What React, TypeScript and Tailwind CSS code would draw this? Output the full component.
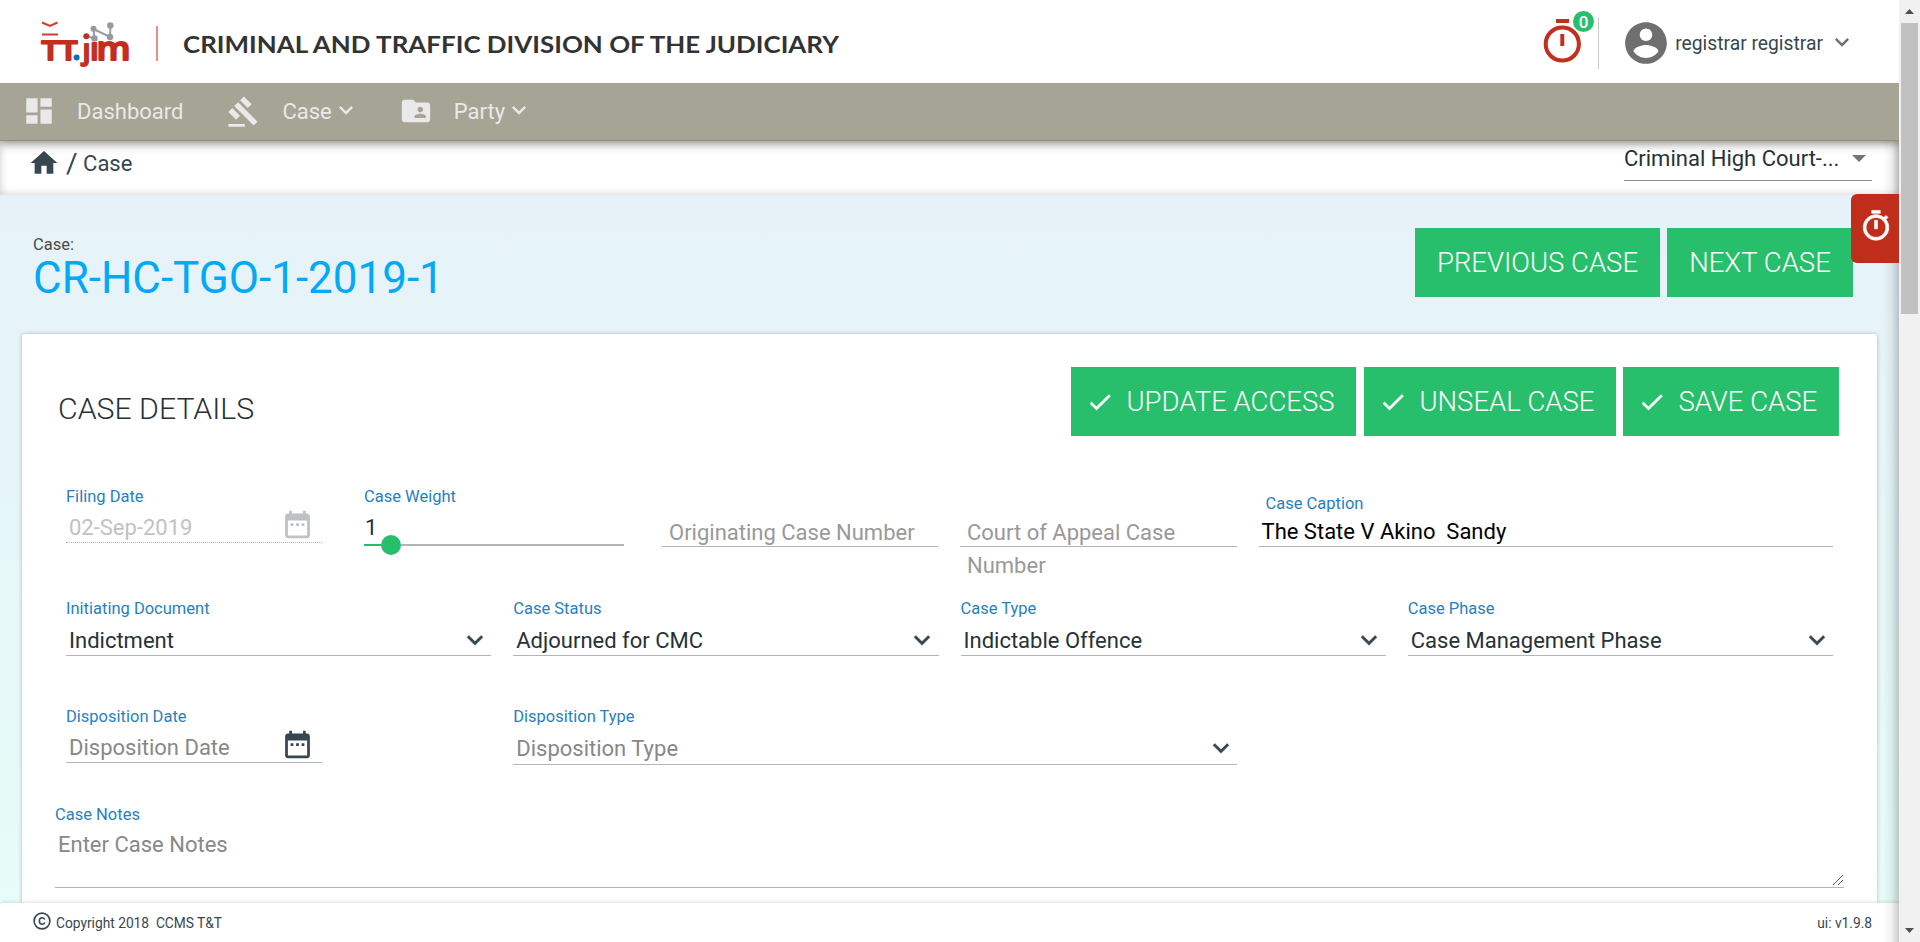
import type { ReactNode } from "react";

type IconProps = { d: string; className?: string };

function Icon({ d, className = "" }: IconProps) {
  return (
    <svg viewBox="0 0 24 24" fill="currentColor" className={`block shrink-0 ${className}`} aria-hidden="true">
      <path d={d} />
    </svg>
  );
}

const paths = {
  dashboard: "M3 13h8V3H3v10zm0 8h8v-6H3v6zm10 0h8V11h-8v10zm0-18v6h8V3h-8z",
  gavel:
    "M1 21h12v2H1zM5.245 8.07l2.83-2.827 14.14 14.142-2.828 2.828zM12.317 1l5.657 5.656-2.83 2.83-5.654-5.66zM3.825 9.485l5.657 5.657-2.828 2.828-5.657-5.657z",
  folder:
    "M20 6h-8l-2-2H4c-1.1 0-1.99.9-1.99 2L2 18c0 1.1.9 2 2 2h16c1.1 0 2-.9 2-2V8c0-1.1-.9-2-2-2zm-5 3c1.1 0 2 .9 2 2s-.9 2-2 2-2-.9-2-2 .9-2 2-2zm4 8h-8v-1c0-1.33 2.67-2 4-2s4 .67 4 2v1z",
  home: "M10 20v-6h4v6h5v-8h3L12 3 2 12h3v8z",
  chevron: "M16.59 8.59L12 13.17 7.41 8.59 6 10l6 6 6-6z",
  account:
    "M12 2C6.48 2 2 6.48 2 12s4.48 10 10 10 10-4.48 10-10S17.52 2 12 2zm0 3c1.66 0 3 1.34 3 3s-1.34 3-3 3-3-1.34-3-3 1.34-3 3-3zm0 14.2c-2.5 0-4.71-1.28-6-3.22.03-1.99 4-3.08 6-3.08 1.99 0 5.97 1.09 6 3.08-1.29 1.94-3.5 3.22-6 3.22z",
  timer:
    "M15 1H9v2h6V1zm-4 13h2V8h-2v6zm8.03-6.61l1.42-1.42c-.43-.51-.9-.99-1.41-1.41l-1.42 1.42C16.07 4.74 14.12 4 12 4c-4.97 0-9 4.03-9 9s4.02 9 9 9 9-4.03 9-9c0-2.12-.74-4.07-1.97-5.61zM12 20c-3.87 0-7-3.13-7-7s3.13-7 7-7 7 3.13 7 7-3.13 7-7 7z",
  calendar:
    "M9 11H7v2h2v-2zm4 0h-2v2h2v-2zm4 0h-2v2h2v-2zm2-7h-1V2h-2v2H8V2H6v2H5c-1.11 0-1.99.9-1.99 2L3 20c0 1.1.89 2 2 2h14c1.1 0 2-.9 2-2V6c0-1.1-.9-2-2-2zm0 16H5V9h14v11z",
  check: "M9 16.17L4.83 12l-1.42 1.41L9 19 21 7l-1.41-1.41z",
};

function Logo() {
  return (
    <svg viewBox="0 0 900 83" className="block h-[83px] w-[900px] font-['Lato',sans-serif]">
      <g fill="none" stroke="#c9402f" strokeWidth="2">
        <path d="M42 22.500l8 3.500 7.500-3.500" />
        <path d="M42 34.500h16" />
      </g>
      <g stroke="#9a9c9f" strokeWidth="2" fill="none">
        <path d="M94.500 38.500L93.500 29L110 37L110.500 26M86 36L94.500 38.500" />
      </g>
      <g fill="#97999c">
        <circle cx="93.500" cy="28.800" r="3" />
        <circle cx="94.500" cy="38.500" r="3.200" />
        <circle cx="110" cy="37" r="3.200" />
        <circle cx="110.300" cy="25.500" r="3.200" />
      </g>
      <circle cx="86.300" cy="36.300" r="3" fill="#c32f1e" />
      <circle cx="76.600" cy="57.400" r="3" fill="#0a6fb5" />
      <g
        fill="#c32f1e"
        stroke="#c32f1e"
        strokeWidth="1.800"
        strokeLinejoin="round"
        className="font-['Open_Sans',sans-serif] font-semibold"
      >
        <text x="41.500" y="60.200" fontSize="26.500" textLength="36" lengthAdjust="spacingAndGlyphs">TT</text>
        <text x="82.800" y="58.500" fontSize="27">ȷ</text>
        <text x="90" y="60" fontSize="31">ı</text>
        <text x="96.500" y="60" fontSize="32" textLength="34" lengthAdjust="spacingAndGlyphs">m</text>
      </g>
      <path d="M157 26v35" stroke="#e98f86" strokeWidth="2" />
      <text
        x="183"
        y="53.300"
        fill="#333"
        fontSize="22"
        fontWeight="700"
        textLength="656"
        lengthAdjust="spacingAndGlyphs"
      >
        CRIMINAL AND TRAFFIC DIVISION OF THE JUDICIARY
      </text>
    </svg>
  );
}

function Header() {
  return (
    <header className="relative z-20 flex h-[83px] justify-between bg-white">
      <Logo />
      <div className="flex">
        <div className="relative mt-[18px] h-[51px] w-[57px] border-r border-[#c8c8c8]">
          <svg viewBox="0 0 40 48" className="block h-12 w-10 text-[#c32f1e]" fill="none" stroke="currentColor">
            <circle cx="20.300" cy="26" r="16.600" strokeWidth="4" />
            <path d="M14 3h13M20.300 16v12" strokeWidth="4" />
          </svg>
          <span className="absolute top-[-7px] left-[31px] flex size-[21px] items-center justify-center rounded-full bg-[#27bf6c] pt-px text-[17px] leading-none font-medium text-white">
            0
          </span>
        </div>
        <div className="mt-[18px] ml-[22px] flex h-[50px] items-center">
          <Icon d={paths.account} className="size-[50px] text-[#6f6f6f]" />
          <span className="mt-[2px] ml-1 text-[19.300px] text-[#37474f]">registrar registrar</span>
          <Icon d={paths.chevron} className="mr-[43px] mb-[3px] ml-[5px] size-7 text-[#6f6f6f]" />
        </div>
      </div>
    </header>
  );
}

function Nav() {
  return (
    <nav className="relative z-10 flex h-[58px] border-b border-[#92906f] bg-[#a6a494] text-[22px] leading-[58px] text-[#e9e9e9] shadow-[0_2px_10px_rgba(0,0,0,0.4)]">
      <Icon d={paths.dashboard} className="mt-[11px] ml-[21.500px] size-[34px]" />
      <span className="ml-[21.500px]">Dashboard</span>
      <Icon d={paths.gavel} className="mt-[12px] ml-[44px] size-[33px]" />
      <span className="ml-[22px]">Case</span>
      <Icon d={paths.chevron} className="mt-[13px] size-7" />
      <Icon d={paths.folder} className="mt-[11px] ml-[39px] size-[34px]" />
      <span className="ml-[21px]">Party</span>
      <Icon d={paths.chevron} className="mt-[13px] size-7" />
    </nav>
  );
}

function Breadcrumb() {
  return (
    <div className="flex h-[54px] justify-between bg-white shadow-[inset_0_0_8px_rgba(0,0,0,0.22)]">
      <div className="flex text-[22px] leading-[45px] text-[#37474f]">
        <Icon d={paths.home} className="mt-[6px] ml-7 size-8" />
        <span className="ml-[6px] text-[28px]">/</span>
        <span className="ml-[5.500px]">Case</span>
      </div>
      <div className="mr-[27px] flex h-[40px] w-[248px] justify-between border-b border-[#8c8c8c] text-[22px] leading-[35px] text-[#263238]">
        <span>Criminal High Court-...</span>
        <svg viewBox="0 0 14 7" className="mt-[14px] mr-[6.500px] h-[7px] w-[14px] fill-[#757575]">
          <path d="M0 0h14L7 7z" />
        </svg>
      </div>
    </div>
  );
}

function Button({ children, check = false, className = "" }: { children: ReactNode; check?: boolean; className?: string }) {
  return (
    <button
      className={`flex h-[69px] items-center bg-[#27bf6c] text-[27.500px] leading-[69px] font-light whitespace-nowrap text-white ${className}`}
    >
      {check && <Icon d={paths.check} className="mr-[13px] ml-[14.500px] size-[28px] stroke-current stroke-[0.4]" />}
      {children}
    </button>
  );
}

function Field({ label, children, className = "" }: { label: string; children: ReactNode; className?: string }) {
  return (
    <div className={className}>
      <div className="mb-[7px] h-[21px] text-[16.500px] leading-[22px] text-[#2a7fbd]">{label}</div>
      {children}
    </div>
  );
}

function Select({ label, value, muted = false, className = "" }: { label: string; value: string; muted?: boolean; className?: string }) {
  return (
    <Field label={label} className={className}>
      <div
        className={`flex justify-between border-b border-[#b5b5b5] pl-[3px] ${
          muted ? "h-[31px] leading-[29px] text-[#888]" : "h-[30px] leading-[30px] text-[#263238]"
        }`}
      >
        <span>{value}</span>
        <Icon
          d={paths.chevron}
          className="mt-[-2px] mr-[0.5px] size-8 stroke-current stroke-[0.3] text-[#37474f]"
        />
      </div>
    </Field>
  );
}

function DateField({ label, value, disabled = false }: { label: string; value: string; disabled?: boolean }) {
  return (
    <Field label={label} className="w-64">
      <div
        className={`flex h-[29px] justify-between border-b pl-[3px] leading-[27px] ${
          disabled ? "border-dotted border-[#b5b5b5] text-[#c2c2c2]" : "border-[#b5b5b5] text-[#888]"
        }`}
      >
        <span>{value}</span>
        <Icon
          d={paths.calendar}
          className={`mt-[-6px] mr-2 size-[33px] ${disabled ? "text-[#bcc1c4]" : "text-[#37474f]"}`}
        />
      </div>
    </Field>
  );
}

function CaseCard() {
  return (
    <section className="mr-[22px] ml-[22px] flex-1 rounded-t-[3px] bg-white shadow-[0_0_4px_rgba(0,0,0,0.25)]">
      <div className="flex justify-between pt-[33px] pr-[38px] pl-[36px]">
        <h2 className="pt-[14px] text-[30.250px] leading-[55px] font-light text-[#263238]">CASE DETAILS</h2>
        <div className="flex">
          <Button check className="mr-2 w-[285px]">UPDATE ACCESS</Button>
          <Button check className="mr-[7px] w-[252px]">UNSEAL CASE</Button>
          <Button check className="w-[216px]">SAVE CASE</Button>
        </div>
      </div>

      <div className="mr-11 ml-11 text-[22px] whitespace-nowrap">
        <div className="mt-[50px] grid h-[61px] grid-cols-[298px_298px_298px_299px_574px]">
          <DateField label="Filing Date" value="02-Sep-2019" disabled />
          <Field label="Case Weight" className="w-[260px]">
            <div className="h-[30px] pl-px leading-[27px] text-[#263238]">1</div>
            <div className="flex h-[2px] items-center">
              <div className="h-[2px] w-[17px] bg-[#27bf6c]" />
              <div className="size-5 shrink-0 rounded-full bg-[#27bf6c]" />
              <div className="h-[2px] flex-1 bg-[#b5b5b5]" />
            </div>
          </Field>
          <div className="mt-8 h-[29px] w-[276px] border-b border-[#b5b5b5] pl-[7px] leading-[29px] text-[#999]">
            Originating Case Number
          </div>
          <div className="mt-8 h-[29px] w-[277px] border-b border-[#b5b5b5] pl-[7px] leading-[33px] whitespace-normal text-[#999]">
            <span className="relative top-[-2px] block">Court of Appeal Case Number</span>
          </div>
          <div className="pt-[7px]">
            <div className="h-[21px] pl-[6.500px] text-[16.500px] leading-[22px] text-[#2a7fbd]">Case Caption</div>
            <div className="mt-1 h-[29px] border-b border-[#b5b5b5] pl-[2.500px] leading-[27px] whitespace-pre text-black">
              {"The State V Akino  Sandy"}
            </div>
          </div>
        </div>

        <div className="mt-[51px] grid grid-cols-4 gap-[22px]">
          <Select label="Initiating Document" value="Indictment" />
          <Select label="Case Status" value="Adjourned for CMC" />
          <Select label="Case Type" value="Indictable Offence" />
          <Select label="Case Phase" value="Case Management Phase" />
        </div>

        <div className="mt-[50px] grid grid-cols-4 gap-[22px]">
          <DateField label="Disposition Date" value="Disposition Date" />
          <Select label="Disposition Type" value="Disposition Type" muted className="w-[724px]" />
        </div>

        <div className="mt-[39px] mr-[-11px] ml-[-11px]">
          <div className="h-5 text-[16.500px] leading-[22px] text-[#2a7fbd]">Case Notes</div>
          <div className="flex h-[64px] items-end justify-between border-b border-[#b5b5b5] pl-[3px] text-[#888]">
            <span className="mb-[27px] leading-[31px]">Enter Case Notes</span>
            <svg viewBox="0 0 12 12" className="mb-px size-3" stroke="#555" fill="none">
              <path d="M1 11L11 1M6 11l5-5" />
            </svg>
          </div>
        </div>
      </div>
    </section>
  );
}

function Footer() {
  return (
    <footer className="relative flex h-[39px] shrink-0 justify-between rounded-t-[3px] bg-white pr-[27px] pl-[33px] text-[13.750px] leading-[40px] text-[#37474f] shadow-[0_0_4px_rgba(0,0,0,0.2)]">
      <div className="flex">
        <svg viewBox="0 0 18 18" className="mt-[8.500px] mr-[5px] size-[18px]" fill="none" stroke="currentColor" strokeWidth="1.600">
          <circle cx="9" cy="9" r="7.900" />
          <path d="M11.800 7.500C11.300 6.300 10.400 5.700 9.100 5.700C7.400 5.700 6.400 7 6.400 9S7.400 12.300 9.100 12.300C10.400 12.300 11.300 11.700 11.800 10.500" />
        </svg>
        <span className="whitespace-pre">{"Copyright 2018  CCMS T&T"}</span>
      </div>
      <span>ui: v1.9.8</span>
    </footer>
  );
}

function Scrollbar() {
  return (
    <div className="flex w-[21px] flex-col items-center justify-between bg-[#f1f1f1]">
      <div className="flex flex-col items-center">
        <svg viewBox="0 0 9 5" className="mt-[9px] h-[5px] w-[9px] fill-[#505050]">
          <path d="M4.500 0L9 5H0z" />
        </svg>
        <div className="mt-[9px] h-[291px] w-[17px] bg-[#c1c1c1]" />
      </div>
      <svg viewBox="0 0 9 5" className="mb-[9px] h-[5px] w-[9px] fill-[#505050]">
        <path d="M0 0h9L4.500 5z" />
      </svg>
    </div>
  );
}

export default function App() {
  return (
    <div className="flex h-[942px] w-[1920px] overflow-hidden font-['Roboto',sans-serif]">
      <div className="relative flex min-w-0 flex-1 flex-col overflow-hidden">
        <Header />
        <Nav />
        <Breadcrumb />
        <main className="flex min-h-0 flex-1 flex-col overflow-hidden bg-linear-to-b from-[#e6f2f8] via-[#e6f7f8] to-[#e7fdf9]">
          <div className="flex h-[139px] shrink-0 justify-between pr-[46px] pl-[33px]">
            <div className="pt-[39px]">
              <div className="h-5 text-[16.500px] leading-[22px] text-[#4a4a4a]">Case:</div>
              <h1 className="text-[44px] leading-[49px] text-[#03a9f4]">CR-HC-TGO-1-2019-1</h1>
            </div>
            <div className="flex pt-[33px]">
              <Button className="mr-[7px] w-[245px] justify-center">PREVIOUS CASE</Button>
              <Button className="w-[186px] justify-center">NEXT CASE</Button>
            </div>
          </div>
          <CaseCard />
        </main>
        <Footer />
        <div className="pointer-events-none absolute top-[141px] right-0 bottom-0 w-4 bg-linear-to-r from-transparent via-black/5 to-black/20" />
        <button className="absolute top-[194px] right-0 flex h-[69px] w-12 justify-center rounded-l-md bg-[#c02d1b] pt-[15px] pl-px text-white">
          <Icon d={paths.timer} className="size-[34px] stroke-current stroke-[0.5]" />
        </button>
      </div>
      <Scrollbar />
    </div>
  );
}
